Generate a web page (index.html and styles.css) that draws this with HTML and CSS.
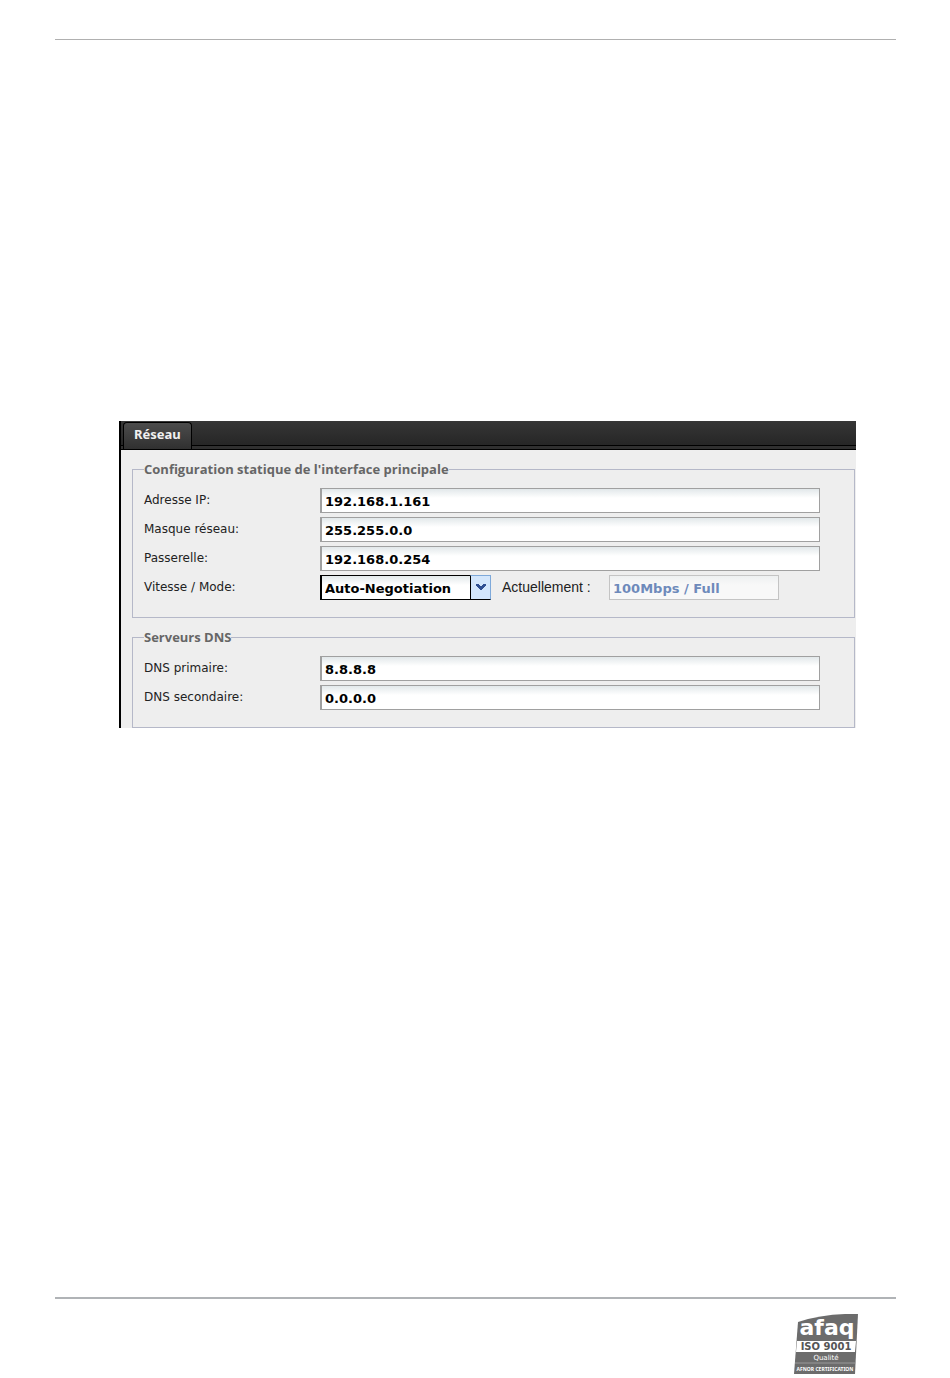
FILE: index.html
```html
<!DOCTYPE html>
<html lang="fr">
<head>
<meta charset="utf-8">
<meta name="viewport" content="width=device-width, initial-scale=1">
<title>Réseau</title>
<link rel="stylesheet" href="styles.css">
</head>
<body>
<header class="page-header"></header>
<main class="content">
  <form class="panel">
    <nav class="tabs"><button type="button" class="tab">Réseau</button></nav>
    <div class="panel-body">
      <fieldset class="group">
        <legend class="group-title">Configuration statique de l'interface principale</legend>
        <div class="row"><label class="label" for="ip">Adresse IP:</label><input class="field" id="ip" type="text" value="192.168.1.161"></div>
        <div class="row"><label class="label" for="mask">Masque réseau:</label><input class="field" id="mask" type="text" value="255.255.0.0"></div>
        <div class="row"><label class="label" for="gateway">Passerelle:</label><input class="field" id="gateway" type="text" value="192.168.0.254"></div>
        <div class="row">
          <label class="label" for="mode">Vitesse / Mode:</label>
          <span class="combo">
            <select class="combo-select" id="mode"><option>Auto-Negotiation</option></select>
            <span class="combo-arrow"><svg width="10" height="7" viewBox="0 0 10 7" aria-hidden="true"><path d="M0 0h3v1h1v1h2V1h1V0h3v2H9v1H8v1H7v1H6v1H4V5H3V4H2V3H1V2H0z" fill="#2f4f92"/></svg></span>
          </span>
          <label class="current-label" for="current">Actuellement :</label>
          <input class="field current" id="current" type="text" value="100Mbps / Full" disabled>
        </div>
      </fieldset>
      <fieldset class="group">
        <legend class="group-title">Serveurs DNS</legend>
        <div class="row"><label class="label" for="dns1">DNS primaire:</label><input class="field" id="dns1" type="text" value="8.8.8.8"></div>
        <div class="row"><label class="label" for="dns2">DNS secondaire:</label><input class="field" id="dns2" type="text" value="0.0.0.0"></div>
      </fieldset>
    </div>
  </form>
</main>
<footer class="page-footer">
  <svg class="logo" width="65" height="62" viewBox="0 0 65 62" role="img" aria-label="afaq ISO 9001 Qualité AFNOR Certification">
    <path d="M4 8Q31 -1 64 0L61 60H0z" fill="#6c6c6c"/>
    <path d="M3 27H62L61 38H2z" fill="#fff"/>
    <path d="M1 49H61" stroke="#999" stroke-width="1"/>
    <text class="logo-name" x="33" y="21">afaq</text>
    <text class="logo-iso" x="32" y="36">ISO 9001</text>
    <text class="logo-quality" x="32" y="46">Qualité</text>
    <text class="logo-cert" x="31" y="57">AFNOR CERTIFICATION</text>
  </svg>
</footer>
</body>
</html>
```
FILE: styles.css
```css
* {
  box-sizing: border-box;
}

body {
  margin: 0;
  padding: 39px 54px 0 55px;
  min-height: 100vh;
  display: flex;
  flex-direction: column;
  background: #fff;
  color: #222;
  font-family: "DejaVu Sans", sans-serif;
  font-size: 12px;
  line-height: 16px;
}

.page-header {
  border-top: 1px solid #b0b0b0;
}

.content {
  flex: 1;
  padding: 381px 40px 0 64px;
}

.panel {
  border-left: 2px solid #000;
  background: #eee;
}

.tabs {
  display: flex;
  height: 29px;
  padding: 1px 2px 0;
  border-bottom: 1px solid #000;
  background: linear-gradient(#363636 0, #262626 24px, #000 24px, #000 25px, #303030 25px);
}

.tab {
  height: 27px;
  padding: 0 10px 4px;
  border: 1px solid #000;
  border-bottom: 0;
  border-radius: 4px 4px 0 0;
  background: linear-gradient(#4c4c4c, #303030);
  color: #f0f0f0;
  font: bold 13px/16px "Noto Sans", sans-serif;
}

.panel-body {
  display: flex;
  flex-direction: column;
  gap: 11px;
  padding: 11px 1px 0 11px;
}

.group {
  min-width: 0;
  margin: 0;
  padding: 11px 34px 17px 11px;
  border: 1px solid #b5b8c8;
}

.group-title {
  padding: 0;
  background: #eee;
  color: #666;
  font: bold 13px/16px "Open Sans", sans-serif;
}

.row {
  display: flex;
  height: 25px;
}

.row + .row {
  margin-top: 4px;
}

.label {
  flex: 0 0 176px;
  padding-top: 4px;
}

.field {
  flex: 1;
  min-width: 0;
  height: 25px;
  padding: 2px 3px 0;
  border: 1px solid #a0a0a0;
  border-left-width: 2px;
  border-radius: 0;
  background: linear-gradient(#e2e8ea, #fff 9px);
  color: #000;
  font: bold 13px/16px "DejaVu Sans", sans-serif;
}

.combo {
  position: relative;
  flex: 0 0 171px;
  height: 25px;
}

.combo-select {
  width: 100%;
  height: 25px;
  padding: 2px 20px 0 3px;
  appearance: none;
  border: 1px solid #000;
  border-left-width: 2px;
  border-radius: 0;
  background: linear-gradient(#e2e8ea, #fff 9px);
  color: #000;
  font: bold 13px/16px "DejaVu Sans", sans-serif;
}

.combo-arrow {
  position: absolute;
  top: 0;
  right: 0;
  display: flex;
  align-items: center;
  justify-content: center;
  width: 21px;
  height: 25px;
  border: 1px solid #7ea9da;
  border-left-color: #000;
  border-bottom-color: #000;
  background: #d3e6fc;
  pointer-events: none;
}

.current-label {
  flex: 0 0 118px;
  padding: 4px 0 0 11px;
  font-family: "Liberation Sans", sans-serif;
  font-size: 14px;
}

.current {
  flex: 0 0 170px;
  border: 1px solid #c4c4c4;
  background: linear-gradient(#eef0f1, #f8f8f8 9px);
  color: #6e8abb;
}

.page-footer {
  display: flex;
  justify-content: flex-end;
  height: 81px;
  padding: 15px 37px 0 0;
  border-top: 2px solid #b0b3b6;
}

.logo text {
  fill: #fff;
  text-anchor: middle;
  font-family: "DejaVu Sans", sans-serif;
  font-weight: bold;
}

.logo .logo-name {
  font-size: 22px;
}

.logo .logo-iso {
  fill: #555;
  font-size: 10px;
}

.logo .logo-quality {
  font-size: 7px;
  font-weight: normal;
}

.logo .logo-cert {
  font-family: "Noto Sans", sans-serif;
  font-size: 5px;
}
```
